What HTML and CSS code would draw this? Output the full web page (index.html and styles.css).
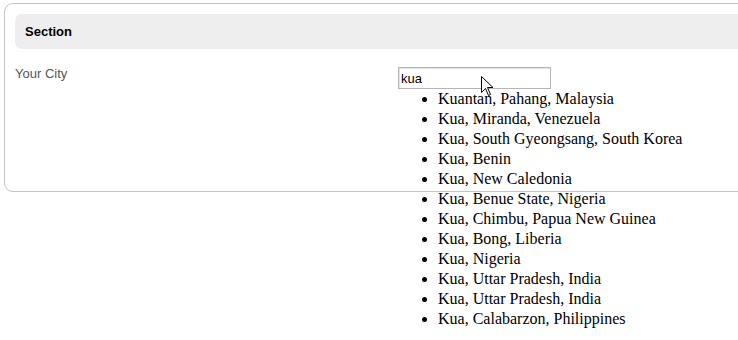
FILE: index.html
```html
<!DOCTYPE html>
<html lang="en">
<head>
    <meta charset="UTF-8">
    <title>Your City</title>
    <link rel="stylesheet" href="styles.css">
</head>
<body>
    <div class="page">
        <div class="panel">
            <div class="panel-head">Section</div>
            <div class="field-row">
                <label class="field-label" for="city">Your City</label>
                <div class="field-input">
                    <input type="text" id="city" value="kua">
                    <ul class="suggestions">
                        <li>Kuantan, Pahang, Malaysia</li>
                        <li>Kua, Miranda, Venezuela</li>
                        <li>Kua, South Gyeongsang, South Korea</li>
                        <li>Kua, Benin</li>
                        <li>Kua, New Caledonia</li>
                        <li>Kua, Benue State, Nigeria</li>
                        <li>Kua, Chimbu, Papua New Guinea</li>
                        <li>Kua, Bong, Liberia</li>
                        <li>Kua, Nigeria</li>
                        <li>Kua, Uttar Pradesh, India</li>
                        <li>Kua, Uttar Pradesh, India</li>
                        <li>Kua, Calabarzon, Philippines</li>
                    </ul>
                    <svg class="pointer" width="13" height="21" viewBox="0 0 13 21">
                        <path d="M0.5 0.5 L0.5 16.5 L4.5 12.5 L7.5 19.5 L9.5 18.5 L6.5 11.5 L12 11.5 Z" fill="#fff" stroke="#000" stroke-width="1" stroke-linejoin="miter"/>
                    </svg>
                </div>
            </div>
        </div>
    </div>
</body>
</html>
```

FILE: styles.css
```css
body {
    margin: 0;
    padding: 0;
    background-color: #fff;
    font-family: "Liberation Sans", Arial, sans-serif;
    font-size: 13px;
    color: #333;
}
.page {
    width: 738px;
    height: 340px;
    overflow: hidden;
}
.panel {
    margin: 3px 0 0 4px;
    width: 800px;
    height: 167px;
    padding: 10px;
    border: 1px solid #c4c4c4;
    border-radius: 9px;
}
.panel-head {
    height: 35px;
    line-height: 36px;
    padding-left: 10px;
    background-color: #eeeeee;
    border-radius: 7px;
    font-weight: bold;
    color: #000;
}
.field-row {
    display: flex;
    align-items: flex-start;
    margin-top: 16px;
}
.field-label {
    width: 383px;
    padding-top: 1px;
    line-height: 15px;
    color: #555;
}
.field-input {
    position: relative;
    margin-top: 2px;
}
.field-input input {
    display: block;
    box-sizing: border-box;
    width: 153px;
    height: 22px;
    margin: 0;
    padding: 0 2px;
    border: 1px solid #b5b5b5;
    box-shadow: inset 1px 1px 1px #e2e2e2;
    font-family: "Liberation Sans", Arial, sans-serif;
    font-size: 13px;
    color: #000;
    outline: none;
}
.suggestions {
    position: absolute;
    top: 22px;
    left: 0;
    margin: 0;
    padding-left: 40px;
    width: 400px;
    font-family: "Liberation Serif", "Times New Roman", serif;
    font-size: 16px;
    line-height: 20px;
    color: #000;
}
.pointer {
    position: absolute;
    left: 83px;
    top: 9px;
}
```
